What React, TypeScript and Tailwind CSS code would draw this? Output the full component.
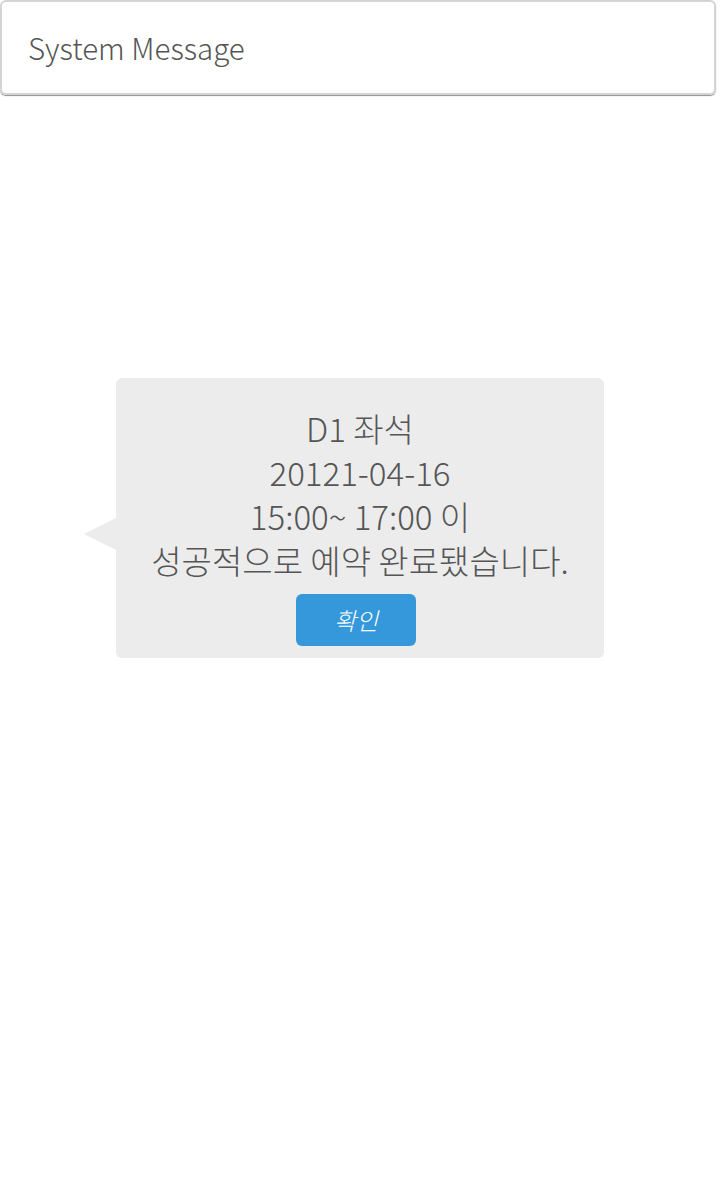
import React from "react";

export default function App() {
  return (
    <div
      className="w-[720px] h-[1200px] bg-white relative"
      style={{ fontFamily: '"Noto Sans CJK KR", "Noto Sans", sans-serif' }}
    >
      <div className="w-[716px] h-[95px] border-2 border-[#d4d4d4] rounded-[6px] shadow-[0_1px_1px_rgba(0,0,0,0.45)] flex items-center pl-[26px]">
        <span className="text-[29.5px] font-light text-[#555555] leading-none">System Message</span>
      </div>
      <div className="flex justify-center pt-[283px]">
        <div className="relative w-[488px] bg-[#ececec] rounded-[6px] pt-[28px] pb-[12px] flex flex-col items-center">
          <div className="absolute left-[-32px] top-[140px] w-0 h-0 border-y-[16px] border-y-transparent border-r-[32px] border-r-[#ececec]" />
          <div className="text-[33px] font-light leading-[44px] text-[#555555] text-center">
            <div>D1 좌석</div>
            <div>20121-04-16</div>
            <div>15:00~ 17:00 이</div>
            <div>성공적으로 예약 완료됐습니다.</div>
          </div>
          <button className="mt-[12px] mr-[8px] w-[120px] h-[52px] bg-[#3498db] rounded-[6px] text-white italic font-light text-[24px] leading-none flex items-center justify-center">
            확인
          </button>
        </div>
      </div>
    </div>
  );
}
